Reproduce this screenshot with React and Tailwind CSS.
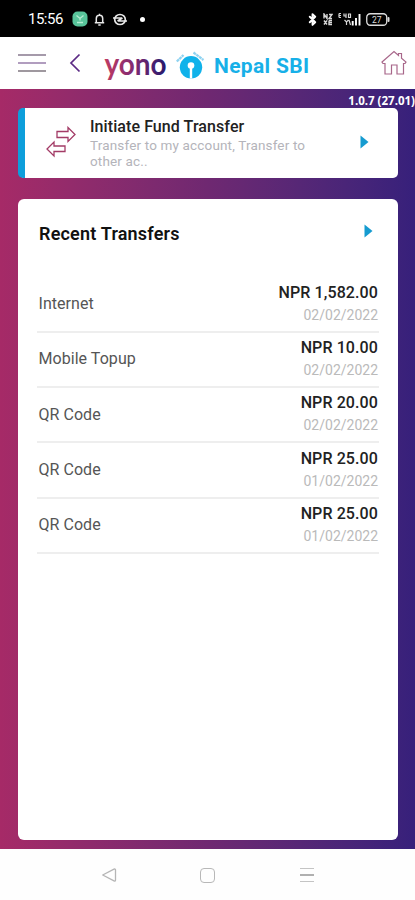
import { Bluetooth } from 'lucide-react'

const transfers = [
  { name: 'Internet', amount: 'NPR 1,582.00', date: '02/02/2022' },
  { name: 'Mobile Topup', amount: 'NPR 10.00', date: '02/02/2022' },
  { name: 'QR Code', amount: 'NPR 20.00', date: '02/02/2022' },
  { name: 'QR Code', amount: 'NPR 25.00', date: '01/02/2022' },
  { name: 'QR Code', amount: 'NPR 25.00', date: '01/02/2022' },
]

function StatusBar() {
  return (
    <div className="flex h-[37px] shrink-0 items-center bg-black pl-7 pr-[25px] pt-[1px] text-white">
      <span className="w-[35px] whitespace-nowrap text-[15px] leading-none tracking-[-0.5px]">15:56</span>
      <svg className="ml-[9px]" width="16" height="16" viewBox="0 0 16 16" fill="none">
        <rect x="0.5" y="0.5" width="15" height="15" rx="5" fill="#58c49a" />
        <path d="M4.5 4.5 8 7.5l3.500-3M8 7.500V9.500M5 11.500h6" stroke="#b5ecd2" strokeWidth="1.300" />
      </svg>
      <svg className="ml-[6px]" width="11" height="13" viewBox="0 0 11 13" fill="none" stroke="#e8e8e8" strokeWidth="1.500">
        <path d="M.8 9.800h9.400M2.300 9.500V5.500a3.200 3.200 0 0 1 6.400 0v4M5.500 2.300V.8M4.300 12h2.400" />
      </svg>
      <svg className="ml-[8px]" width="14" height="13" viewBox="0 0 14 13" fill="none" stroke="#e8e8e8" strokeWidth="1.700">
        <ellipse cx="7" cy="6.500" rx="5.300" ry="5" />
        <path d="M0 5h9M5 8h9M4.500 8l5-3" />
      </svg>
      <span className="ml-[13px] h-[5px] w-[5px] rounded-full bg-white" />
      <Bluetooth className="ml-auto" size={13} strokeWidth={3.5} />
      <svg className="ml-[4px]" width="10" height="13" viewBox="0 0 10 13" fill="none" stroke="#d8d8d8" strokeWidth="1.400">
        <path d="M1 5.500V1l3 4.500V1M6 1.500h3L6 5.500h3M1 7.500l3 4M4 7.500l-3 4M6 7.500v4h3M6 9.500h3M6 7.500h3" />
      </svg>
      <svg className="ml-[5px]" width="23" height="13" viewBox="0 0 23 13" fill="none" stroke="#d8d8d8">
        <path d="M1 .5v4M3 .5H1M3 2.500H1M3 4.500H1M6 .5v2.500h2.500M8 .5v4.500M10.500 1v3.500h2V1zM6.500 7l2 2 2-2M8.500 9v3M11 7l1.500 5" strokeWidth="1.200" />
        <path d="M14.700 8v4.500M18 5v7.500M21.500 1v11.500" stroke="#fff" strokeWidth="1.900" />
      </svg>
      <svg className="ml-[5px]" width="24" height="13" viewBox="0 0 24 13">
        <rect x="0.750" y="0.750" width="20" height="11.500" rx="3.500" fill="none" stroke="#ddd" strokeWidth="1.300" />
        <rect x="21.500" y="4" width="2" height="5" rx="1" fill="#ddd" />
        <text x="10.800" y="9.500" textAnchor="middle" fontSize="8.500" fill="#ddd">27</text>
      </svg>
    </div>
  )
}

function Header() {
  return (
    <header className="flex h-[52px] shrink-0 items-center bg-white pl-[18px] pr-[8px]">
      <div className="flex w-[28px] flex-col gap-[6px]">
        <span className="h-[2px] bg-[#a59aaa]" />
        <span className="h-[2px] bg-[#b19dbf]" />
        <span className="h-[2px] bg-[#9f989f]" />
      </div>
      <svg className="ml-[23px]" width="12" height="20" viewBox="0 0 12 20" fill="none" stroke="#5b2a84" strokeWidth="1.700">
        <path d="M10.500 1.500 2 10l8.500 8.500" />
      </svg>
      <svg className="ml-[21px] shrink-0" width="70" height="52" viewBox="-2 0 70 52">
        <defs>
          <linearGradient id="yono" x1="0" x2="64" y1="0" y2="0" gradientUnits="userSpaceOnUse">
            <stop offset="0" stopColor="#c03c62" />
            <stop offset="0.450" stopColor="#832a72" />
            <stop offset="1" stopColor="#22186c" />
          </linearGradient>
        </defs>
        <text x="0.500" y="38" fontSize="31" fontWeight="700" textLength="62" lengthAdjust="spacingAndGlyphs" fill="url(#yono)" className="font-[Lato,sans-serif]">yono</text>
      </svg>
      <svg className="ml-[4px] shrink-0" width="30" height="32" viewBox="0 0 30 32">
        <circle cx="15" cy="20.300" r="11.200" fill="#10b2ea" />
        <circle cx="15" cy="18.500" r="3.300" fill="#fff" />
        <path d="M13.800 19h2.400v12.500h-2.400z" fill="#fff" />
        <g fill="none" stroke="#8fd3f1" strokeWidth="2.300" strokeDasharray="3 .5">
          <path d="M.8 14.500 7.500 8" />
          <path d="m17.500 5.500 10 7.500" />
        </g>
      </svg>
      <span className="ml-[8px] mt-[7px] whitespace-nowrap text-[21px] font-bold leading-none tracking-[0.35px] text-[#17b0e8]">Nepal SBI</span>
      <svg className="ml-auto shrink-0" width="26" height="27" viewBox="0 0 26 27" fill="none" stroke="#a8678a" strokeWidth="1.200">
        <path d="M1 12 13 1.500l4.500 4V3.500h3v4.800L25 12l-1 1.500h-1.500v10.500H16v-9h-5.500v9H4V13.500H2z" />
      </svg>
    </header>
  )
}

function Arrow() {
  return (
    <svg width="9" height="14" viewBox="0 0 9 14">
      <path d="M.5.500v13L8.500 7z" fill="#159bd0" />
    </svg>
  )
}

function FundTransferCard() {
  return (
    <section className="flex h-[70px] shrink-0 overflow-hidden rounded-[5px] border-l-[7px] border-[#0d9edb] bg-white">
      <svg className="ml-[21px] mt-[18px] shrink-0" width="30" height="32" viewBox="0 0 30 32" fill="none" stroke="#a33b66" strokeWidth="1.300">
        <path d="M11 5.500h11V1.500L29 8.500l-7 7v-4H11z" />
        <path d="M19 20H8v-4L1 23l7 7v-4.500h11z" />
      </svg>
      <div className="ml-[14px] mt-[10px] w-[225px]">
        <h2 className="whitespace-nowrap text-base font-medium leading-[18px] tracking-[0.08px] text-[#222]">Initiate Fund Transfer</h2>
        <p className="mt-px whitespace-nowrap text-[13.500px] leading-[16px] tracking-[0.16px] text-[#b4b4ba]">Transfer to my account, Transfer to<br />other ac..</p>
      </div>
      <div className="ml-auto mr-[29px] mt-[27px]"><Arrow /></div>
    </section>
  )
}

function RecentTransfers() {
  return (
    <section className="mt-[21px] h-[641px] rounded-[6px] bg-white pl-[19px] pr-[19px]">
      <div className="flex h-[78.500px] items-start justify-between pl-[2px] pr-[6px]">
        <h2 className="mt-[24px] whitespace-nowrap text-[18px] font-semibold leading-[22px] tracking-[0.2px] text-[#111]">Recent Transfers</h2>
        <div className="mt-[25px]"><Arrow /></div>
      </div>
      <ul>
        {transfers.map((t, i) => (
          <li key={i} className="flex h-[55.300px] items-center justify-between border-b-2 border-[#eee] pl-[1.500px] pr-[1px]">
            <span className="text-base tracking-[0.05px] text-[#555]">{t.name}</span>
            <div className="-mt-[1px] text-right">
              <p className="text-base font-medium leading-[22px] tracking-[0.1px] text-[#222]">{t.amount}</p>
              <p className="text-[14px] leading-[22px] text-[#bababa]">{t.date}</p>
            </div>
          </li>
        ))}
      </ul>
    </section>
  )
}

function NavBar() {
  return (
    <nav className="flex h-[51px] shrink-0 items-center bg-[#fefefe] pl-[101px] pt-[1px]">
      <svg width="16" height="16" viewBox="0 0 16 16" fill="none" stroke="#b5b5b5" strokeWidth="1.300">
        <path d="M1.700 8 13.500 1.800q1 0 1 1v10.400q0 1-1 1z" strokeLinejoin="round" />
      </svg>
      <span className="ml-[83px] h-[15px] w-[15px] rounded-[4px] border-[1.500px] border-[#b8b8b8]" />
      <div className="ml-[85px] flex w-[14px] flex-col gap-[5px]">
        <span className="h-[1.500px] bg-[#c4c4c4]" />
        <span className="h-[1.500px] bg-[#b0b0b0]" />
        <span className="h-[1.500px] bg-[#c4c4c4]" />
      </div>
    </nav>
  )
}

export default function App() {
  return (
    <div className="flex h-[900px] w-[415px] flex-col overflow-hidden font-[Roboto,sans-serif]">
      <StatusBar />
      <Header />
      <main className="flex h-[760px] flex-col bg-linear-to-r from-[#a62a67] via-[#6f2871] to-[#37207b] pl-[18px] pr-[17px]">
        <div className="-mr-[17px] flex h-[19px] items-center justify-end pt-[5px] font-['Open_Sans',sans-serif] text-[11.500px] font-bold leading-none text-white">1.0.7 (27.01)</div>
        <FundTransferCard />
        <RecentTransfers />
      </main>
      <NavBar />
    </div>
  )
}
